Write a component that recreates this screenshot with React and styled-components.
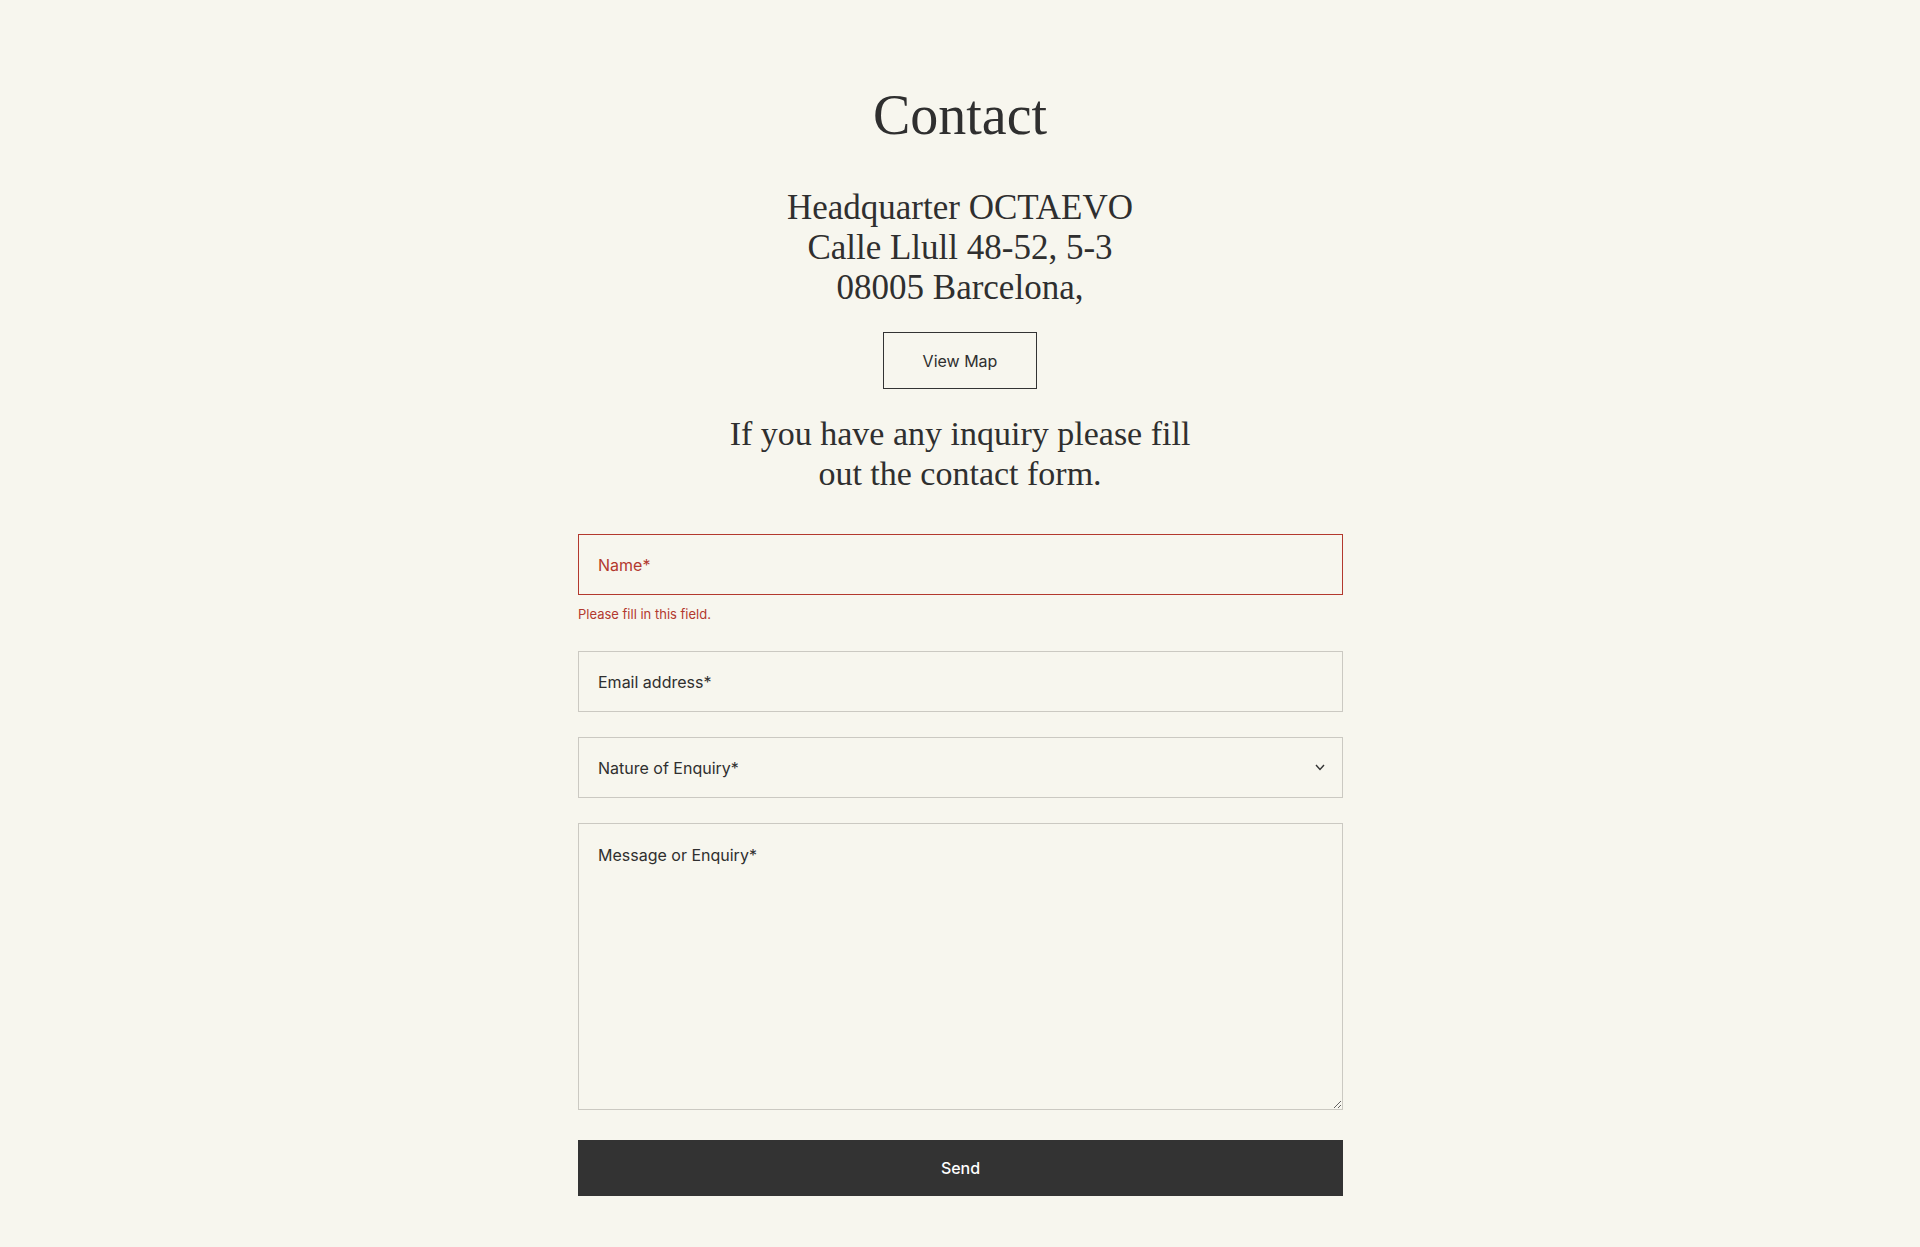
import React from "react";
import styled, { createGlobalStyle } from "styled-components";

const GlobalStyle = createGlobalStyle`
  html, body {
    margin: 0;
    padding: 0;
    background-color: #f7f6ee;
  }

  body {
    font-family: Inter, "Liberation Sans", Arial, sans-serif;
    color: #2f2f2f;
  }

  * {
    box-sizing: border-box;
  }
`;

const ink = "#2f2f2f";
const errorRed = "#b3392e";
const line = "#cbc9c2";

const Page = styled.main`
  display: flex;
  flex-direction: column;
  align-items: center;
  padding: 82px 0 52px;
`;

const Title = styled.h1`
  margin: 0;
  font-family: "Liberation Serif", "Times New Roman", serif;
  font-size: 56px;
  line-height: 67px;
  font-weight: 400;
  color: ${ink};
`;

const SerifText = styled.p`
  margin: ${(props) => props.$top || 0}px 0 0;
  font-family: "Liberation Serif", "Times New Roman", serif;
  font-size: ${(props) => props.$size || 34}px;
  line-height: 40px;
  font-weight: 400;
  text-align: center;
  color: ${ink};
`;

const MapButton = styled.button`
  margin-top: 24px;
  width: 154px;
  height: 57px;
  border: 1px solid #333;
  background: transparent;
  font-family: Inter, "Liberation Sans", sans-serif;
  font-size: 16px;
  color: ${ink};
  cursor: pointer;
`;

const Form = styled.form`
  margin: 40px 0 0 1px;
  width: 765px;
  display: flex;
  flex-direction: column;
  gap: 25px;
`;

const FieldGroup = styled.div`
  display: flex;
  flex-direction: column;
`;

const Input = styled.input`
  width: 100%;
  height: 61px;
  padding: 0 19px;
  border: 1px solid ${(props) => (props.$invalid ? errorRed : line)};
  border-radius: 0;
  background: transparent;
  font-family: Inter, "Liberation Sans", sans-serif;
  font-size: 16px;
  color: ${ink};
  outline: none;

  &::placeholder {
    color: ${(props) => (props.$invalid ? errorRed : ink)};
    opacity: 1;
  }
`;

const ErrorText = styled.span`
  margin-top: 7px;
  font-size: 13px;
  line-height: 24px;
  color: ${errorRed};
`;

const SelectWrap = styled.div`
  position: relative;
`;

const Select = styled.select`
  appearance: none;
  width: 100%;
  height: 61px;
  padding: 0 44px 0 19px;
  border: 1px solid ${line};
  border-radius: 0;
  background: transparent;
  font-family: Inter, "Liberation Sans", sans-serif;
  font-size: 16px;
  color: ${ink};
  outline: none;
`;

const Chevron = styled.svg`
  position: absolute;
  right: 18px;
  top: 27px;
  pointer-events: none;
`;

const TextArea = styled.textarea`
  width: 100%;
  height: 287px;
  padding: 19px;
  border: 1px solid ${line};
  border-radius: 0;
  background: transparent;
  font-family: Inter, "Liberation Sans", sans-serif;
  font-size: 16px;
  line-height: 24px;
  color: ${ink};
  outline: none;
  resize: vertical;

  &::placeholder {
    color: ${ink};
    opacity: 1;
  }
`;

const SendButton = styled.button`
  margin-top: 5px;
  height: 56px;
  border: none;
  background-color: #333;
  color: #fff;
  font-family: Inter, "Liberation Sans", sans-serif;
  font-size: 16px;
  font-weight: 500;
  cursor: pointer;
`;

export default function App() {
  return (
    <>
      <GlobalStyle />
      <Page>
        <Title>Contact</Title>
        <SerifText $top={39} $size={35}>
          Headquarter OCTAEVO
          <br />
          Calle Llull 48-52, 5-3
          <br />
          08005 Barcelona,
        </SerifText>
        <MapButton type="button">View Map</MapButton>
        <SerifText $top={25}>
          If you have any inquiry please fill
          <br />
          out the contact form.
        </SerifText>

        <Form onSubmit={(e) => e.preventDefault()} noValidate>
          <FieldGroup>
            <Input type="text" placeholder="Name*" $invalid />
            <ErrorText>Please fill in this field.</ErrorText>
          </FieldGroup>
          <Input type="email" placeholder="Email address*" />
          <SelectWrap>
            <Select defaultValue="">
              <option value="" disabled>
                Nature of Enquiry*
              </option>
              <option value="general">General</option>
              <option value="press">Press</option>
              <option value="sales">Sales</option>
            </Select>
            <Chevron width="10" height="7" viewBox="0 0 10 7" fill="none">
              <path d="M1 1l4 4.5L9 1" stroke="#333" strokeWidth="1.4" />
            </Chevron>
          </SelectWrap>
          <TextArea placeholder="Message or Enquiry*" />
          <SendButton type="submit">Send</SendButton>
        </Form>
      </Page>
    </>
  );
}
